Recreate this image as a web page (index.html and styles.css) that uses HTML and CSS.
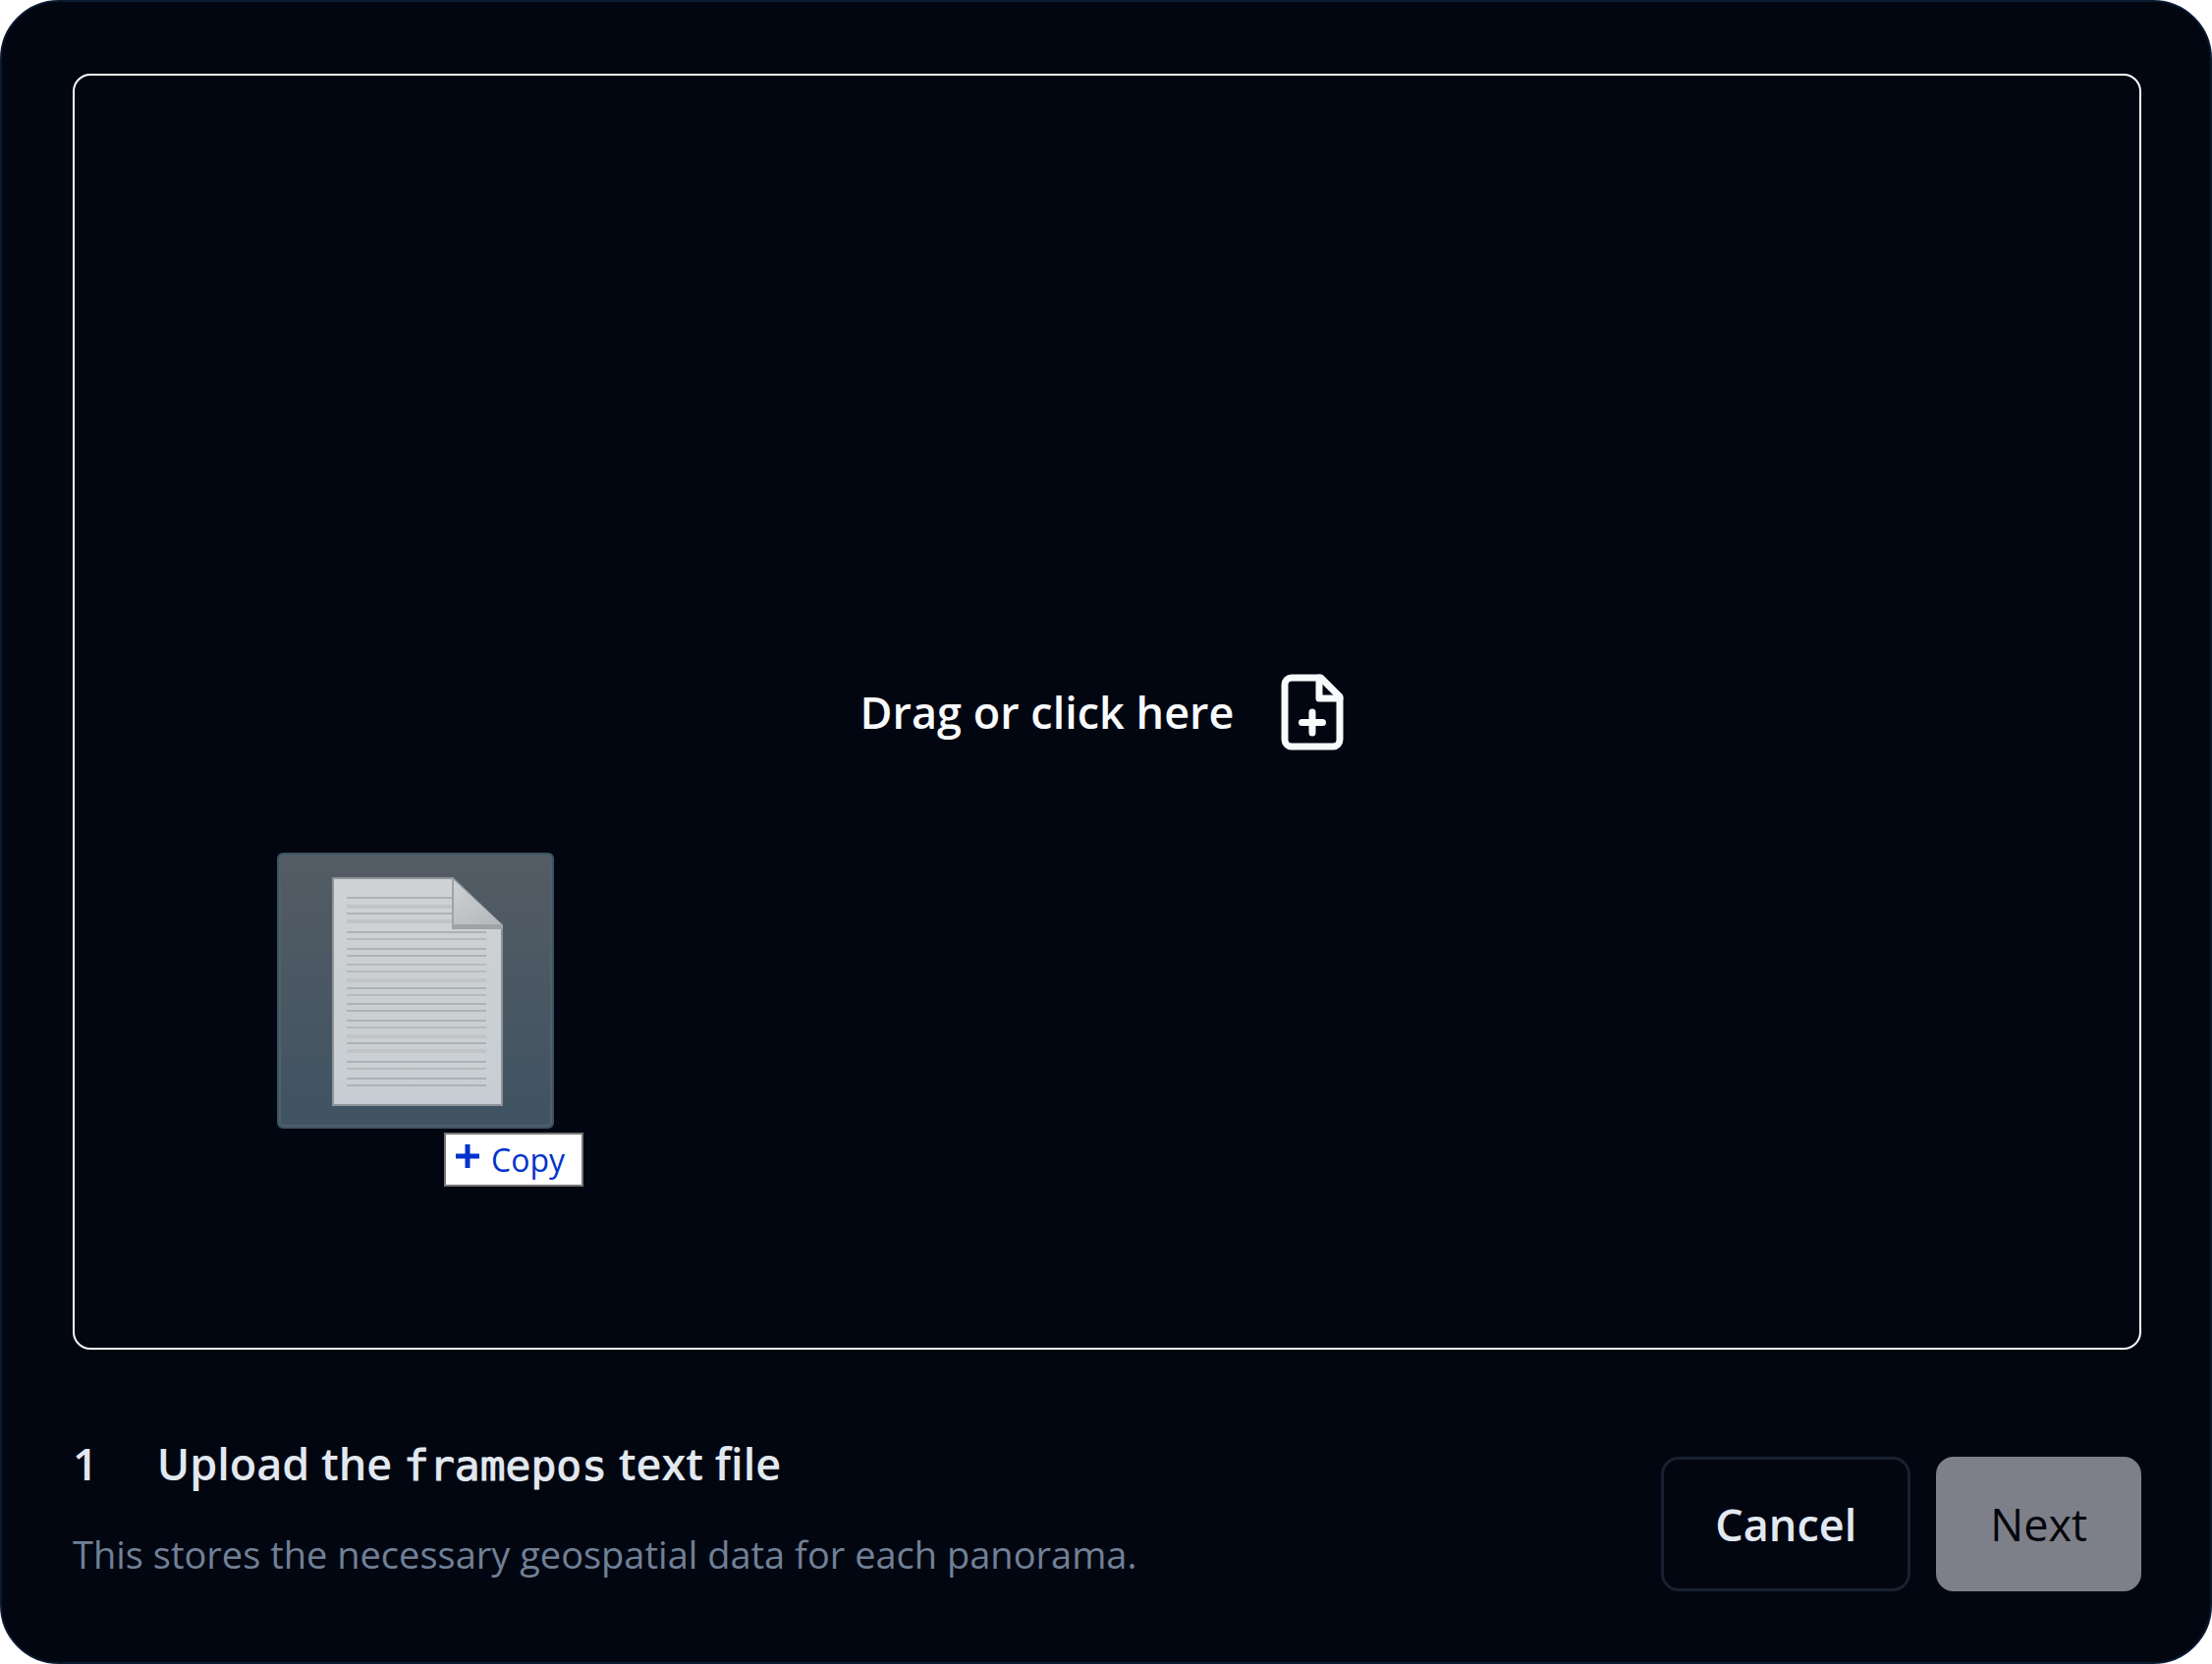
FILE: index.html
```html
<!DOCTYPE html>
<html lang="en">

<head>
    <meta charset="utf-8">
    <title>Upload</title>
    <link rel="stylesheet" href="styles.css">
</head>

<body>
    <div class="dialog" role="dialog">
        <div class="dropzone">
            <label class="dropzone-label" for="file">
                <span>Drag or click here</span>
                <svg class="file-icon" viewBox="0 0 24 24">
                    <path d="M14.5 2H6a2 2 0 0 0-2 2v16a2 2 0 0 0 2 2h12a2 2 0 0 0 2-2V7.5L14.5 2z" />
                    <path d="M14 2v6h6" />
                    <path d="M12 18v-6M9 15h6" />
                </svg>
            </label>
            <input class="file-input" type="file" id="file">

            <!-- Dragged file -->
            <div class="drag-ghost">
                <svg class="drag-preview" viewBox="0 0 282 281">
                    <defs>
                        <linearGradient id="tile" x1="0" y1="0" x2="0" y2="1">
                            <stop offset="0" stop-color="#545c64" />
                            <stop offset="0.55" stop-color="#495763" />
                            <stop offset="1" stop-color="#3f5362" />
                        </linearGradient>
                        <linearGradient id="paper" x1="0" y1="0" x2="0" y2="1">
                            <stop offset="0" stop-color="#d0d3d6" />
                            <stop offset="0.5" stop-color="#cacfd2" />
                            <stop offset="0.85" stop-color="#cacfd3" />
                            <stop offset="1" stop-color="#c7ccd5" />
                        </linearGradient>
                        <linearGradient id="fold" x1="0" y1="0" x2="0.8" y2="1">
                            <stop offset="0" stop-color="#d0d2d4" />
                            <stop offset="1" stop-color="#b4b8bb" />
                        </linearGradient>
                    </defs>
                    <rect x="1" y="1" width="280" height="279" rx="5" fill="url(#tile)" stroke="#3b5364" stroke-width="2" />
                    <rect x="3" y="3" width="276" height="275" rx="4" fill="none" stroke="#535f68" stroke-width="2" />
                    <path d="M57 26H179L229 74V257H57z" fill="url(#paper)" stroke="#8d9397" stroke-width="2" />
                    <path stroke="#aeb2b5" stroke-width="2" d="M71 46H178M71 62H178M71 81H213M71 98H213M71 105H213M71 138H213M71 154H213M71 161H213M71 171H213M71 194H213M71 213H213M71 230H213M71 237H213" />
                    <path stroke="#b6babd" stroke-width="2" d="M71 88H213M71 114H213M71 121H213M71 145H213M71 178H213M71 220H213" />
                    <path stroke="#c0c4c7" stroke-width="4" d="M71 55H178M71 70H178M71 130H213M71 187H213M71 202H213" />
                    <path d="M178 26L230 74V78H178z" fill="url(#fold)" />
                    <path d="M178 73H230V78H178z" fill="#a0a3a5" />
                    <path d="M179 26V78" stroke="#a0a4a7" stroke-width="2" />
                </svg>
                <div class="copy-tip">
                    <svg class="copy-plus" viewBox="0 0 24 24">
                        <path d="M12 0v24M0 12h24" />
                    </svg>
                    <span>Copy</span>
                </div>
            </div>
        </div>

        <div class="footer">
            <div class="step">
                <h2 class="step-title">
                    <span>1</span>
                    <span>Upload the <code>framepos</code> text file</span>
                </h2>
                <p class="step-text">This stores the necessary geospatial data for each panorama.</p>
            </div>
            <div class="actions">
                <button class="btn btn-cancel" type="button">Cancel</button>
                <button class="btn btn-next" type="button" disabled>Next</button>
            </div>
        </div>
    </div>
</body>

</html>
```

FILE: styles.css
```css
* {
    box-sizing: border-box;
}

body {
    margin: 0;
    background-color: #fff;
    font-family: "Open Sans", "Noto Sans", sans-serif;
    font-size: 45px;
}

.dialog {
    display: flex;
    flex-direction: column;
    gap: 84px;
    min-height: 100vh;
    padding: 73px 70px 72px 72px;
    background-color: #020611;
    border: 2px solid #0b1a30;
    border-radius: 60px;
}

/* Drop area */
.dropzone {
    position: relative;
    display: flex;
    flex: 1;
    border: 2px solid #f8fafc;
    border-radius: 18px;
}

.dropzone-label {
    display: flex;
    flex: 1;
    align-items: center;
    justify-content: center;
    gap: 38px;
    color: #f8fafc;
    font-weight: 600;
    cursor: pointer;
}

.file-icon {
    width: 84px;
    height: 84px;
    fill: none;
    stroke: #f8fafc;
    stroke-width: 2;
    stroke-linecap: round;
    stroke-linejoin: round;
}

.file-input {
    position: absolute;
    width: 1px;
    height: 1px;
    opacity: 0;
}

.drag-ghost {
    position: absolute;
    left: 206px;
    top: 791px;
    display: flex;
    flex-direction: column;
    gap: 4px;
    pointer-events: none;
}

.drag-preview {
    display: block;
    width: 282px;
    height: 281px;
}

.copy-tip {
    display: flex;
    align-items: center;
    gap: 12px;
    width: 142px;
    height: 55px;
    margin-left: 170px;
    padding-left: 10px;
    background-color: #fff;
    border: 2px solid #767676;
    color: #0033cc;
    font-size: 32px;
    line-height: 48px;
}

.copy-plus {
    width: 24px;
    height: 24px;
    margin-bottom: 8px;
    stroke: #0033cc;
    stroke-width: 5;
}

/* Footer */
.footer {
    display: flex;
    align-items: flex-end;
    justify-content: space-between;
}

.step {
    padding-bottom: 10px;
}

.step-title {
    display: flex;
    gap: 60px;
    margin: 0;
    color: #e2e8f0;
    font-size: 45px;
    font-weight: 600;
    line-height: 64px;
}

.step-title code {
    font-family: "DejaVu Sans Mono", monospace;
    font-size: 43px;
    font-weight: 400;
    -webkit-text-stroke: 1px #e2e8f0;
}

.step-text {
    margin: 30px 0 0;
    color: #718096;
    font-size: 38px;
    line-height: 56px;
}

.actions {
    display: flex;
    gap: 26px;
}

.btn {
    height: 137px;
    padding: 0 52px;
    border: 3px solid #172131;
    border-radius: 18px;
    background-color: transparent;
    font-family: inherit;
    font-size: 45px;
    cursor: pointer;
}

.btn-cancel {
    color: #e2e8f0;
    font-weight: 600;
}

.btn-next {
    border-color: #7d8088;
    background-color: #7d8088;
    color: #05070c;
    cursor: default;
}
```
